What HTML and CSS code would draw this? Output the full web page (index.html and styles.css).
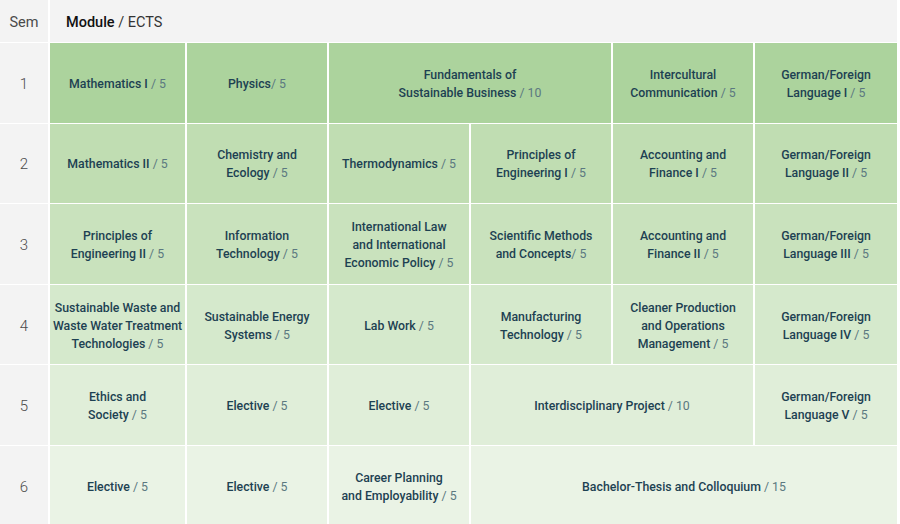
FILE: index.html
```html
<!DOCTYPE html>
<html>
<head>
<meta charset="utf-8">
<link rel="stylesheet" href="styles.css">
</head>
<body>
<div class="table">
  <div class="hd sem-h">Sem</div>
  <div class="hd mod-h"><span><b>Module</b> / ECTS</span></div>

  <div class="sem">1</div>
  <div class="c r1"><span><b>Mathematics I</b> / 5</span></div>
  <div class="c r1"><span><b>Physics</b>/ 5</span></div>
  <div class="c r1 s2"><span><b>Fundamentals of<br>Sustainable Business</b> / 10</span></div>
  <div class="c r1"><span><b>Intercultural<br>Communication</b> / 5</span></div>
  <div class="c r1"><span><b>German/Foreign<br>Language I</b> / 5</span></div>

  <div class="sem">2</div>
  <div class="c r2"><span><b>Mathematics II</b> / 5</span></div>
  <div class="c r2"><span><b>Chemistry and<br>Ecology</b> / 5</span></div>
  <div class="c r2"><span><b>Thermodynamics</b> / 5</span></div>
  <div class="c r2"><span><b>Principles of<br>Engineering I</b> / 5</span></div>
  <div class="c r2"><span><b>Accounting and<br>Finance I</b> / 5</span></div>
  <div class="c r2"><span><b>German/Foreign<br>Language II</b> / 5</span></div>

  <div class="sem">3</div>
  <div class="c r3"><span><b>Principles of<br>Engineering II</b> / 5</span></div>
  <div class="c r3"><span><b>Information<br>Technology</b> / 5</span></div>
  <div class="c r3"><span><b>International Law<br>and International<br>Economic Policy</b> / 5</span></div>
  <div class="c r3"><span><b>Scientific Methods<br>and Concepts</b>/ 5</span></div>
  <div class="c r3"><span><b>Accounting and<br>Finance II</b> / 5</span></div>
  <div class="c r3"><span><b>German/Foreign<br>Language III</b> / 5</span></div>

  <div class="sem">4</div>
  <div class="c r4"><span><b>Sustainable Waste and<br>Waste Water Treatment<br>Technologies</b> / 5</span></div>
  <div class="c r4"><span><b>Sustainable Energy<br>Systems</b> / 5</span></div>
  <div class="c r4"><span><b>Lab Work</b> / 5</span></div>
  <div class="c r4"><span><b>Manufacturing<br>Technology</b> / 5</span></div>
  <div class="c r4"><span><b>Cleaner Production<br>and Operations<br>Management</b> / 5</span></div>
  <div class="c r4"><span><b>German/Foreign<br>Language IV</b> / 5</span></div>

  <div class="sem">5</div>
  <div class="c r5"><span><b>Ethics and<br>Society</b> / 5</span></div>
  <div class="c r5"><span><b>Elective</b> / 5</span></div>
  <div class="c r5"><span><b>Elective</b> / 5</span></div>
  <div class="c r5 s2"><span><b>Interdisciplinary Project</b> / 10</span></div>
  <div class="c r5"><span><b>German/Foreign<br>Language V</b> / 5</span></div>

  <div class="sem">6</div>
  <div class="c r6"><span><b>Elective</b> / 5</span></div>
  <div class="c r6"><span><b>Elective</b> / 5</span></div>
  <div class="c r6"><span><b>Career Planning<br>and Employability</b> / 5</span></div>
  <div class="c r6 s3"><span><b>Bachelor-Thesis and Colloquium</b> / 15</span></div>
</div>
</body>
</html>
```

FILE: styles.css
```css
html, body {
  margin: 0;
  padding: 0;
  background: #ffffff;
}

body {
  font-family: Roboto, "Liberation Sans", sans-serif;
  width: 900px;
  height: 524px;
  overflow: hidden;
}

.table {
  display: grid;
  width: 897px;
  grid-template-columns: 48px 135px 140px 140px 140px 140px 142px;
  grid-template-rows: 42px repeat(6, 79.6px);
  column-gap: 2px;
  row-gap: 1px;
  background: #ffffff;
}

.hd {
  background: #f3f3f3;
  display: flex;
  align-items: center;
  font-size: 14.5px;
  padding-top: 2px;
}

.sem-h {
  justify-content: center;
  color: #4a4a4a;
  font-weight: 400;
}

.mod-h {
  grid-column: 2 / 8;
  padding-left: 16px;
  color: #333333;
}

.mod-h b {
  font-weight: 500;
  color: #111111;
}

.sem {
  background: #f3f3f3;
  display: flex;
  align-items: center;
  justify-content: center;
  color: #4a4a4a;
  font-size: 15px;
  font-weight: 300;
  padding-top: 2px;
}

.c {
  display: flex;
  align-items: center;
  justify-content: center;
  text-align: center;
  font-size: 12.3px;
  line-height: 18px;
  color: #5b7880;
  padding-top: 2px;
}

.c b {
  font-weight: 500;
  color: #1d4152;
}

.s2 { grid-column: span 2; }
.s3 { grid-column: span 3; }

.r1 { background: #acd39d; }
.r2 { background: #c0ddb2; }
.r3 { background: #c9e2bd; }
.r4 { background: #d5e9cc; }
.r5 { background: #e0eed9; }
.r6 { background: #eaf3e5; }
```
